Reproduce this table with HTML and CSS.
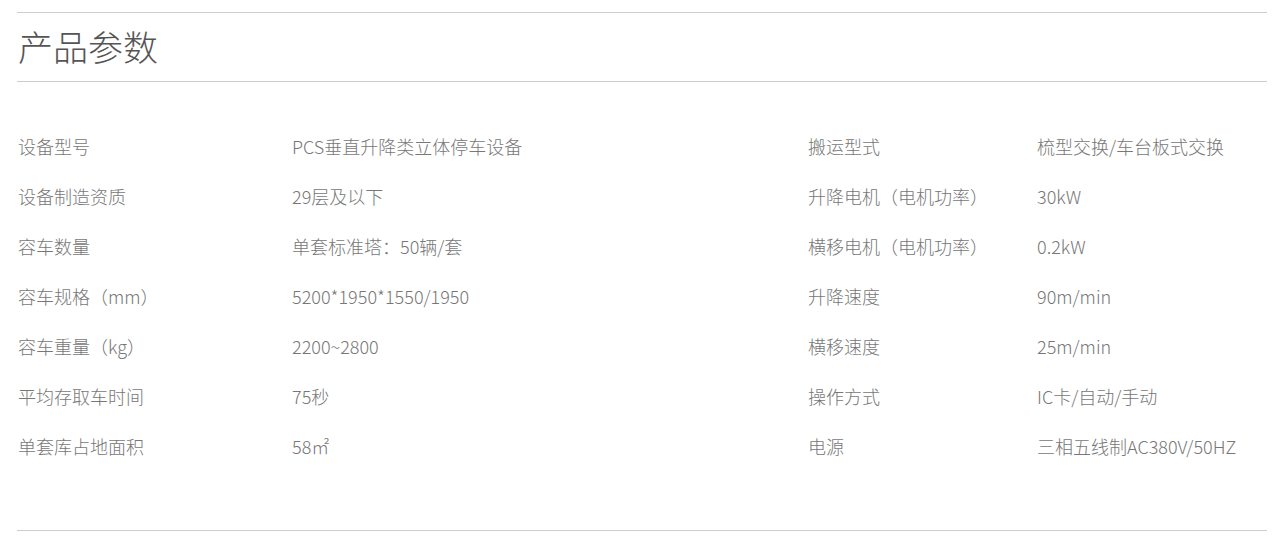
FILE: index.html
```html
<!DOCTYPE html>
<html lang="zh-CN">
<head>
<meta charset="utf-8">
<title>产品参数</title>
<link rel="stylesheet" href="styles.css">
</head>
<body>
<section class="params">
  <header class="params-head">
    <h2 class="params-title">产品参数</h2>
  </header>
  <div class="params-body">
    <div class="params-grid">
      <div class="cell">设备型号</div><div class="cell">PCS垂直升降类立体停车设备</div><div class="cell">搬运型式</div><div class="cell">梳型交换/车台板式交换</div>
      <div class="cell">设备制造资质</div><div class="cell">29层及以下</div><div class="cell">升降电机（电机功率）</div><div class="cell">30kW</div>
      <div class="cell">容车数量</div><div class="cell">单套标准塔：50辆/套</div><div class="cell">横移电机（电机功率）</div><div class="cell">0.2kW</div>
      <div class="cell">容车规格（mm）</div><div class="cell">5200*1950*1550/1950</div><div class="cell">升降速度</div><div class="cell">90m/min</div>
      <div class="cell">容车重量（kg）</div><div class="cell">2200~2800</div><div class="cell">横移速度</div><div class="cell">25m/min</div>
      <div class="cell">平均存取车时间</div><div class="cell">75秒</div><div class="cell">操作方式</div><div class="cell">IC卡/自动/手动</div>
      <div class="cell">单套库占地面积</div><div class="cell">58㎡</div><div class="cell">电源</div><div class="cell">三相五线制AC380V/50HZ</div>
    </div>
  </div>
</section>
</body>
</html>
```

FILE: styles.css
```css
html, body {
  margin: 0;
  padding: 0;
  background: #fff;
}

body {
  font-family: "Noto Sans CJK SC", "Noto Sans", sans-serif;
  color: #777;
}

.params {
  margin: 12px 0 0 17px;
  width: 1250px;
  border-top: 1px solid #cdcdcd;
  border-bottom: 1px solid #cdcdcd;
}

.params-head {
  height: 69px;
  box-sizing: border-box;
  padding-bottom: 4px;
  display: flex;
  align-items: center;
  border-bottom: 1px solid #cdcdcd;
}

.params-title {
  margin: 0;
  padding-left: 1px;
  font-size: 35px;
  font-weight: 300;
  color: #555;
  line-height: 1;
}

.params-body {
  padding: 39px 0 59px 1px;
}

.params-grid {
  display: grid;
  grid-template-columns: 274px 516px 229px 1fr;
  grid-auto-rows: 50px;
}

.cell {
  display: flex;
  align-items: center;
  font-size: 18px;
  font-weight: 300;
  line-height: 1;
  white-space: nowrap;
}
```
